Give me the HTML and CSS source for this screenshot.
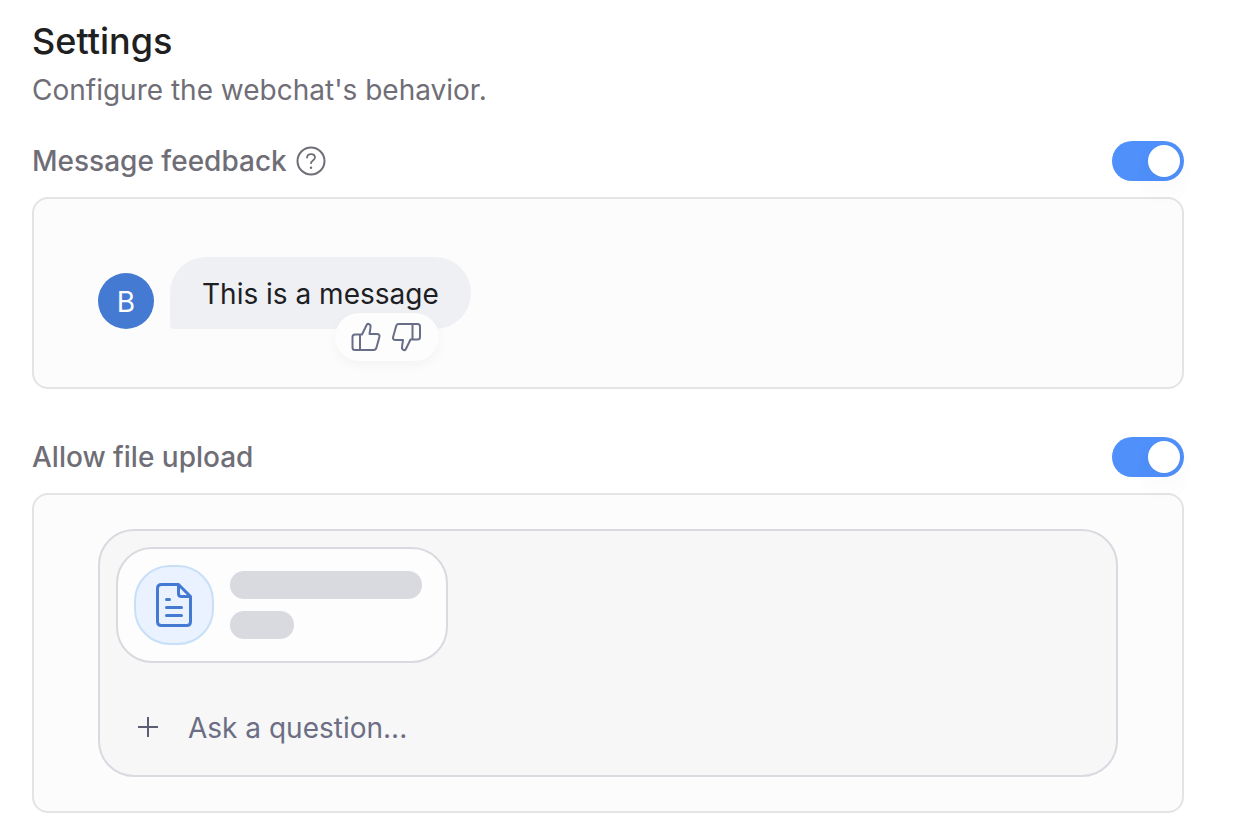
FILE: index.html
```html
<!DOCTYPE html>
<html lang="en">
<head>
<meta charset="utf-8">
<meta name="viewport" content="width=device-width, initial-scale=1">
<title>Settings</title>
<link rel="stylesheet" href="styles.css">
</head>
<body>
<main class="settings">
  <header class="settings-header">
    <h1 class="title">Settings</h1>
    <p class="subtitle">Configure the webchat's behavior.</p>
  </header>

  <div class="options">
    <section class="option">
      <div class="option-head">
        <div class="option-name">
          <label for="feedback">Message feedback</label>
          <button class="icon-button" type="button" aria-label="About message feedback">
            <svg width="32" height="32" viewBox="0 0 32 32" fill="none" stroke="currentColor" stroke-width="2" stroke-linecap="round" stroke-linejoin="round"><circle cx="16" cy="16" r="13.5"/><path stroke-width="1.8" d="M12 12.600c.200-2.200 1.800-3.500 4-3.500s4 1.300 4 3.400c0 2.900-4 2.900-4 5.700"/><circle cx="16" cy="22.700" r="1.200" fill="currentColor" stroke="none"/></svg>
          </button>
        </div>
        <input class="switch" id="feedback" type="checkbox" role="switch" checked>
      </div>
      <div class="preview preview-message">
        <div class="avatar">B</div>
        <div class="bubble">
          This is a message
          <div class="reactions">
            <button class="icon-button" type="button" aria-label="Good response">
              <svg width="32" height="32" viewBox="0 0 32 32" fill="none" stroke="currentColor" stroke-width="2" stroke-linejoin="round"><path d="M9 13.500h2L15.500 4.200c.500-1.200 1.200-1.600 2.200-1.200 1.500.500 2.100 1.700 1.800 3.300L18.500 13H26c2 0 2.900 1.200 2.400 3l-3 10.800c-.400 1.500-1.200 2.200-2.700 2.200H4C2.500 29 1.500 28 1.500 26.500V16c0-1.500 1-2.500 2.500-2.500h5V29"/></svg>
            </button>
            <button class="icon-button" type="button" aria-label="Bad response">
              <svg width="32" height="32" viewBox="0 0 32 32" fill="none" stroke="currentColor" stroke-width="2" stroke-linejoin="round"><path transform="rotate(180 15.500 16)" d="M9.500 13.500h2L16 4.200c.500-1.200 1.200-1.600 2.200-1.200 1.500.500 2.100 1.700 1.800 3.300L19 13h7.500c2 0 2.900 1.200 2.400 3l-3 10.800c-.400 1.500-1.200 2.200-2.700 2.200H4.500C3 29 2 28 2 26.500V16c0-1.500 1-2.500 2.500-2.500h5V29"/></svg>
            </button>
          </div>
        </div>
      </div>
    </section>

    <section class="option">
      <div class="option-head">
        <div class="option-name">
          <label for="upload">Allow file upload</label>
        </div>
        <input class="switch" id="upload" type="checkbox" role="switch" checked>
      </div>
      <div class="preview preview-upload">
        <div class="composer">
          <div class="file">
            <div class="file-icon">
              <svg width="48" height="48" viewBox="0 0 48 48" fill="none" stroke="currentColor" stroke-width="3" stroke-linecap="round" stroke-linejoin="round"><path d="M28.500 3.500H11.500Q7.500 3.500 7.500 7.500V40.500Q7.500 44.500 11.500 44.500H36.500Q40.500 44.500 40.500 40.500V15.500L28.500 3.500V12.500Q28.500 15.500 31.500 15.500H40"/><path d="M16.500 18.500h3M16.500 26.500h15M16.500 34.500h15"/></svg>
            </div>
            <div class="file-lines">
              <div class="line line-name"></div>
              <div class="line line-size"></div>
            </div>
          </div>
          <div class="composer-input">
            <button class="icon-button" type="button" aria-label="Attach a file">
              <svg width="32" height="32" viewBox="0 0 32 32" fill="none" stroke="currentColor" stroke-width="2"><path d="M16 6v20M6 16h20"/></svg>
            </button>
            <input class="question" type="text" aria-label="Question" placeholder="Ask a question...">
          </div>
        </div>
      </div>
    </section>
  </div>
</main>
</body>
</html>
```
FILE: styles.css
```css
* {
  box-sizing: border-box;
}

body {
  margin: 0;
  background: #fff;
  color: #6f6e77;
  font-family: Inter, "Liberation Sans", sans-serif;
  font-size: 28px;
  line-height: 40px;
}

.settings {
  display: flex;
  flex-direction: column;
  gap: 31px;
  padding: 16px 50px 24px 32px;
}

.settings-header {
  display: flex;
  flex-direction: column;
  gap: 4px;
}

.title {
  margin: 0;
  color: #202020;
  font-size: 36px;
  font-weight: 500;
  line-height: 50px;
}

.subtitle {
  margin: 0;
}

.options {
  display: flex;
  flex-direction: column;
  gap: 48px;
}

.option {
  display: flex;
  flex-direction: column;
  gap: 16px;
}

.option-head {
  display: flex;
  align-items: center;
  justify-content: space-between;
}

.option-name {
  display: flex;
  align-items: center;
  gap: 8px;
  font-weight: 500;
}

.icon-button {
  display: flex;
  padding: 0;
  border: 0;
  background: none;
  color: inherit;
}

.switch {
  appearance: none;
  position: relative;
  display: flex;
  align-items: center;
  width: 72px;
  height: 40px;
  margin: 0;
  padding: 4px;
  border-radius: 20px;
  background: #d9d9e0;
}

.switch::before {
  content: "";
  width: 32px;
  height: 32px;
  border-radius: 50%;
  background: #fff;
  box-shadow: 0 16px 48px rgba(0, 0, 0, 0.03), 0 8px 24px rgba(0, 0, 0, 0.03);
}

.switch:checked {
  justify-content: flex-end;
  background: #5090fa;
}

.preview {
  border: 2px solid #e4e4e4;
  border-radius: 16px;
  background: #fcfcfc;
}

.preview-message {
  display: flex;
  align-items: flex-end;
  gap: 16px;
  padding: 58px 64px;
}

.avatar {
  width: 56px;
  height: 56px;
  border-radius: 50%;
  background: #447ad2;
  color: #fcfcfd;
  line-height: 58px;
  text-align: center;
}

.bubble {
  position: relative;
  padding: 17px 32px 15px;
  border-radius: 36px 36px 36px 4px;
  background: #eff0f3;
  color: #1c2024;
}

.reactions {
  position: absolute;
  right: 32px;
  bottom: -32px;
  display: flex;
  gap: 8px;
  padding: 8px 16px;
  border-radius: 24px;
  background: #fdfdfd;
  color: #696e88;
  box-shadow: 0 4px 12px rgba(0, 0, 0, 0.04);
}

.preview-upload {
  padding: 34px 64px;
}

.composer {
  display: flex;
  flex-direction: column;
  align-items: flex-start;
  gap: 44px;
  padding: 16px 16px 28px;
  border: 2px solid #d9d9e0;
  border-radius: 36px;
  background: #f7f7f7;
}

.file {
  display: flex;
  align-items: center;
  gap: 16px;
  padding: 16px 24px 16px 16px;
  border: 2px solid #d9d9e0;
  border-radius: 36px;
  background: #fdfdfd;
}

.file-icon {
  display: grid;
  place-items: center;
  width: 80px;
  height: 80px;
  border: 2px solid #c8dff8;
  border-radius: 36px;
  background: #e9f2fe;
  color: #447ad2;
}

.file-lines {
  display: flex;
  flex-direction: column;
  gap: 12px;
}

.line {
  height: 28px;
  border-radius: 14px;
  background: #d9dae0;
}

.line-name {
  width: 192px;
}

.line-size {
  width: 64px;
}

.composer-input {
  display: flex;
  align-items: center;
  align-self: stretch;
  gap: 24px;
  padding-left: 16px;
  color: #5c5f73;
}

.question {
  flex: 1;
  min-width: 0;
  height: 40px;
  padding: 2px 0 0;
  border: 0;
  background: none;
  color: #1c2024;
  font: inherit;
}

.question::placeholder {
  color: #6b6e85;
  opacity: 1;
}
```
